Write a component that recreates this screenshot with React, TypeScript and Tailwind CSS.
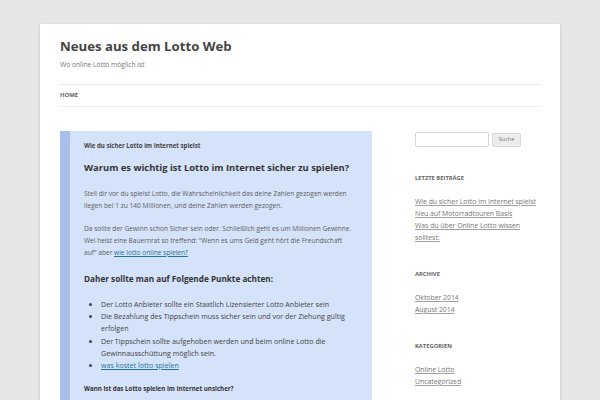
import React from 'react';

const recent = [
  'Wie du sicher Lotto im Internet spielst',
  'Neu auf Motorradtouren Basis',
  'Was du über Online Lotto wissen solltest:',
];

function WidgetTitle({ children }: { children: React.ReactNode }) {
  return (
    <h3 className="text-[5.8px] font-bold uppercase text-[#636363] leading-[8px]">
      {children}
    </h3>
  );
}

function WidgetLinks({ items }: { items: string[] }) {
  return (
    <ul className="mt-[14px] text-[6.85px] leading-[12px] text-[#757575]">
      {items.map((t) => (
        <li key={t}>
          <a className="underline decoration-[#a0a0a0]">{t}</a>
        </li>
      ))}
    </ul>
  );
}

export default function App() {
  return (
    <div
      className="w-[600px] h-[400px] overflow-hidden bg-[#e6e6e6] pt-[24px] px-[40px]"
      style={{ fontFamily: '"Open Sans", "DejaVu Sans", sans-serif' }}
    >
      <div className="bg-white h-[400px] px-[20px] shadow-[0_1px_3px_rgba(0,0,0,0.15)]">
        <header className="pt-[12px]">
          <h1 className="text-[13.2px] font-bold leading-[20px] text-[#444]">Neues aus dem Lotto Web</h1>
          <p className="mt-[4px] text-[6.7px] leading-[10px] text-[#757575]">Wo online Lotto möglich ist</p>
          <nav className="mt-[14px] border-y border-[#ededed] h-[23px] flex items-center">
            <span className="text-[5.9px] font-bold uppercase text-[#5e5e5e]">Home</span>
          </nav>
        </header>

        <div className="flex mt-[24px]">
          <main className="w-[312px] shrink-0">
            <article className="bg-[#d4e2fa] border-l-[10px] border-[#a8c0e9] pl-[14px] pr-[18px] pt-[10px] pb-[20px]">
              <h2 className="text-[6.1px] font-bold leading-[10px] text-[#444]">
                Wie du sicher Lotto im Internet spielst
              </h2>
              <h3 className="mt-[10px] text-[9.4px] font-bold leading-[14px] text-[#333]">
                Warum es wichtig ist Lotto im Internet sicher zu spielen?
              </h3>
              <p className="mt-[13px] text-[6.6px] leading-[12px] text-[#5e5e5e]">
                Stell dir vor du spielst Lotto, die Wahrscheinlichkeit das deine Zahlen gezogen werden liegen bei 1 zu 140 Millionen, und deine Zahlen werden gezogen.
              </p>
              <p className="mt-[11px] text-[6.6px] leading-[12px] text-[#5e5e5e]">
                Da sollte der Gewinn schon Sicher sein oder. Schließlich geht es um Millionen Gewinne. Wei heist eine Bauernrat so treffend: "Wenn es ums Geld geht hört die Freundschaft auf" aber{' '}
                <a className="text-[#21759b] underline">wie lotto online spielen?</a>
              </p>
              <h3 className="mt-[14px] text-[8.2px] font-bold leading-[12px] text-[#333]">
                Daher sollte man auf Folgende Punkte achten:
              </h3>
              <ul className="mt-[13px] ml-[17px] list-disc text-[7.1px] leading-[12.2px] text-[#444]">
                <li>Der Lotto Anbieter sollte ein Staatlich Lizensierter Lotto Anbieter sein</li>
                <li>Die Bezahlung des Tippschein muss sicher sein und vor der Ziehung gültig erfolgen</li>
                <li>Der Tippschein sollte aufgehoben werden und beim online Lotto die Gewinnausschüttung möglich sein.</li>
                <li>
                  <a className="text-[#21759b] underline">was kostet lotto spielen</a>
                </li>
              </ul>
              <h4 className="mt-[13px] text-[6.2px] font-bold leading-[10px] text-[#333]">
                Wann ist das Lotto spielen im Internet unsicher?
              </h4>
            </article>
          </main>

          <aside className="ml-[43px] w-[125px] pt-[1px]">
            <div className="flex items-center gap-[3px]">
              <div className="w-[74px] h-[15px] border border-[#d6d6d6] rounded-[2px] bg-white" />
              <button className="h-[14px] w-[29px] rounded-[2px] border border-[#d9d9d9] bg-[#ececec] text-[5.5px] text-[#7a7a7a] leading-none">
                Suche
              </button>
            </div>

            <div className="mt-[27px]">
              <WidgetTitle>Letzte Beiträge</WidgetTitle>
              <WidgetLinks items={recent} />
            </div>

            <div className="mt-[26px]">
              <WidgetTitle>Archive</WidgetTitle>
              <WidgetLinks items={['Oktober 2014', 'August 2014']} />
            </div>

            <div className="mt-[26px]">
              <WidgetTitle>Kategorien</WidgetTitle>
              <WidgetLinks items={['Online Lotto', 'Uncategorized']} />
            </div>
          </aside>
        </div>
      </div>
    </div>
  );
}
